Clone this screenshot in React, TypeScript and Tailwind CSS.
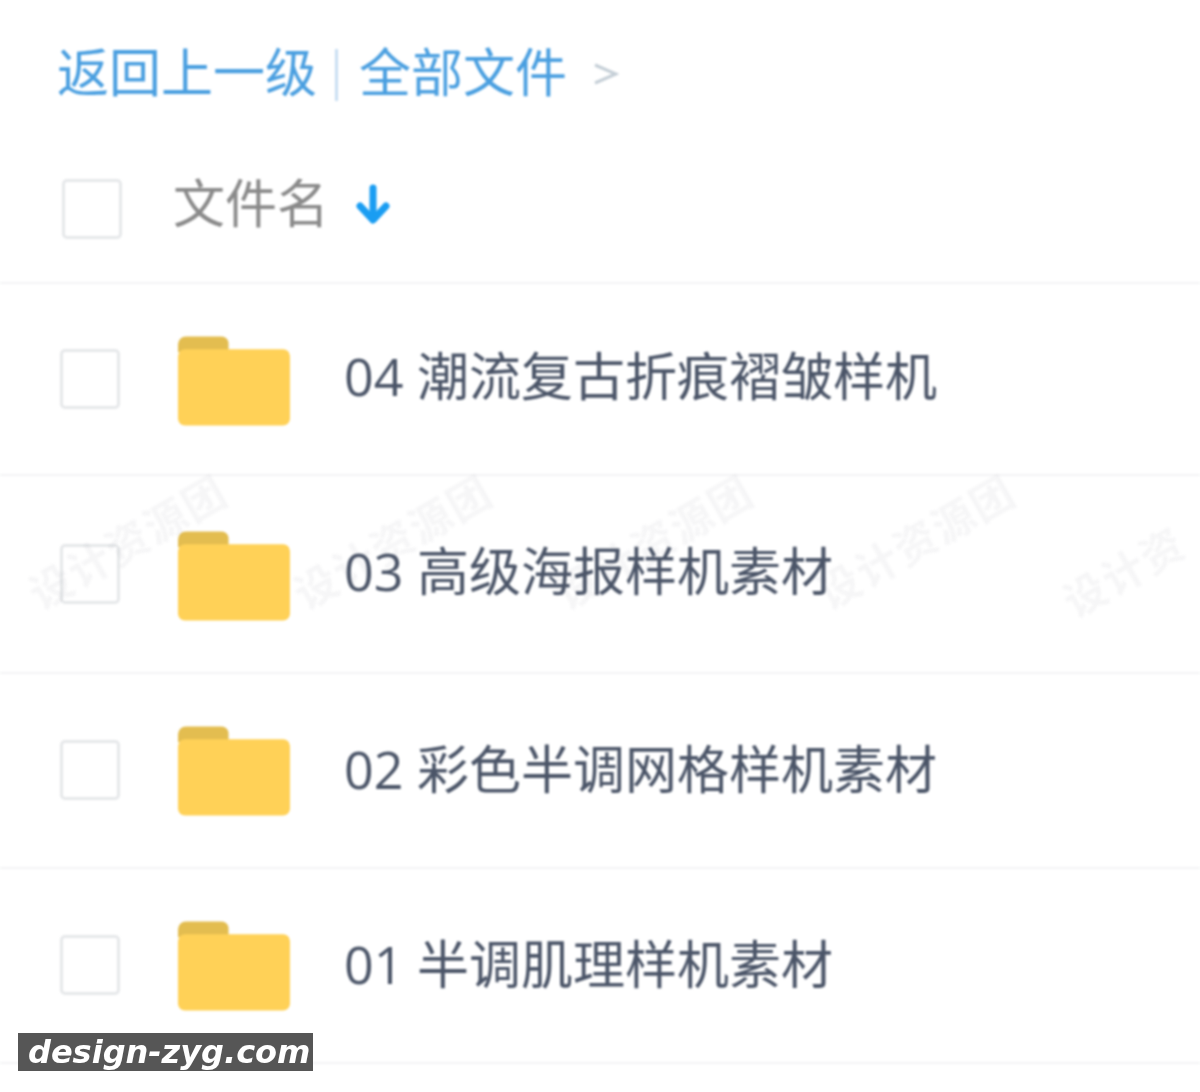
import React from 'react';

const cjk = "font-['Open_Sans','Noto_Sans_CJK_SC',sans-serif]";

interface FolderRow {
  name: string;
  rowClass: string;
  boxClass: string;
  textClass: string;
}

const rows: FolderRow[] = [
  { name: '04 潮流复古折痕褶皱样机', rowClass: 'h-[192px] pt-[52px]', boxClass: 'mt-[13px]', textClass: 'mt-[5px]' },
  { name: '03 高级海报样机素材', rowClass: 'h-[198px] pt-[55px]', boxClass: 'mt-[13px]', textClass: 'mt-[5px]' },
  { name: '02 彩色半调网格样机素材', rowClass: 'h-[195px] pt-[52px]', boxClass: 'mt-[14px]', textClass: 'mt-[8px]' },
  { name: '01 半调肌理样机素材', rowClass: 'h-[195px] pt-[52px]', boxClass: 'mt-[14px]', textClass: 'mt-[8px]' },
];

const marks = [
  'left-[18px] top-[520px]',
  'left-[283px] top-[520px]',
  'left-[544px] top-[520px]',
  'left-[806px] top-[520px]',
  'left-[1058px] top-[550px]',
];

const Folder = () => (
  <svg width="112" height="90" viewBox="0 0 113 90" className="shrink-0">
    <path d="M0 8a8 8 0 0 1 8-8h36a7 7 0 0 1 7 7v9H0z" fill="#e3bd50" />
    <path d="M0 20a7 7 0 0 1 7-7h99a7 7 0 0 1 7 7v63a7 7 0 0 1-7 7H7a7 7 0 0 1-7-7z" fill="#ffd157" />
  </svg>
);

const Checkbox = ({ className }: { className: string }) => (
  <div className={`w-[60px] h-[60px] shrink-0 rounded-[5px] border-[3px] border-[#e6e8ea] bg-white/40 ${className}`} />
);

export default function App() {
  return (
    <div className={`relative w-[1200px] h-[1092px] overflow-hidden bg-white ${cjk}`}>
      <div className="blur-[0.8px]">
        <div className="h-[120px] pl-[57px] pt-[42px] flex items-start">
          <div className="flex items-center h-[60px] text-[52px] leading-[60px] font-normal text-[#4a9fe0]">
            <span>返回上一级</span>
            <span className="w-[3px] h-[52px] bg-[#c9def2] ml-[18px] mr-[21px] mt-[6px]" />
            <span>全部文件</span>
            <svg width="26" height="30" viewBox="0 0 26 30" className="ml-[26px] mt-[4px]">
              <path d="M2 6l21 9-21 9" fill="none" stroke="#c4ced6" strokeWidth="3" />
            </svg>
          </div>
        </div>
        <div className="h-[164px] pl-[62px] pt-[59px] flex items-start border-b-2 border-[#f3f4f5]">
          <Checkbox className="border-[#e2e3e5]" />
          <span className="ml-[51px] -mt-[6px] text-[52px] leading-[60px] font-normal text-[#8a8a8a]">文件名</span>
          <svg width="34" height="40" viewBox="0 0 34 40" className="ml-[27px] mt-[5px]">
            <path d="M17 4v26" stroke="#1a9df2" strokeWidth="7" strokeLinecap="round" />
            <path d="M4 22l13 14 13-14" fill="none" stroke="#1a9df2" strokeWidth="7" strokeLinecap="round" strokeLinejoin="round" />
          </svg>
        </div>
        {rows.map((row) => (
          <div key={row.name} className={`flex items-start pl-[60px] border-b-2 border-[#f3f4f5] ${row.rowClass}`}>
            <Checkbox className={row.boxClass} />
            <div className="ml-[58px]">
              <Folder />
            </div>
            <span className={`ml-[54px] text-[52px] leading-[70px] font-normal text-[#4b5568] whitespace-nowrap ${row.textClass}`}>
              {row.name}
            </span>
          </div>
        ))}
      </div>

      {marks.map((pos) => (
        <span
          key={pos}
          aria-hidden="true"
          className={`absolute ${pos} -rotate-[30deg] text-[42px] leading-[44px] font-bold tracking-[2px] text-[#4a5568]/5 whitespace-nowrap blur-[1px]`}
        >
          {pos.startsWith('left-[1058px]') ? '设计资' : '设计资源团'}
        </span>
      ))}

      <div className="absolute left-[18px] top-[1033px] w-[295px] h-[38px] pl-[10px] bg-[#565656] flex items-center font-['DejaVu_Sans',sans-serif] font-bold italic text-[32px] leading-[38px] text-white blur-[0.5px] whitespace-nowrap">
        design-zyg.com
      </div>
    </div>
  );
}
